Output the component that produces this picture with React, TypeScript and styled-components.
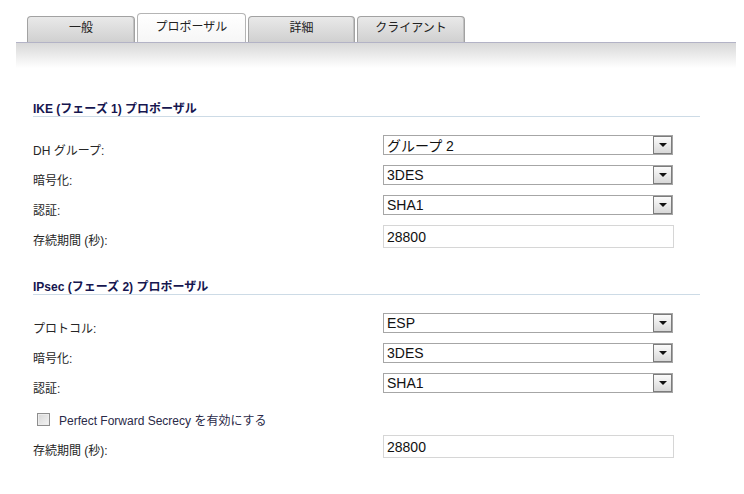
import styled, { createGlobalStyle } from "styled-components";

const GlobalStyle = createGlobalStyle`
  body {
    margin: 0;
    background: #ffffff;
    font-family: "Liberation Sans", "Noto Sans CJK JP", sans-serif;
    color: #222222;
  }
`;

const Page = styled.div`
  width: 720px;
  margin-left: 16px;
`;

const TabBar = styled.nav`
  display: flex;
  align-items: flex-end;
  gap: 2px;
  height: 29px;
  padding: 13px 0 0 11px;
  border-bottom: 1px solid #b3b3c6;
`;

const Tab = styled.button<{ $active?: boolean; $width: number }>`
  width: ${(p) => p.$width}px;
  height: ${(p) => (p.$active ? 29 : 26)}px;
  padding: 0;
  border: 1px solid ${(p) => (p.$active ? "#b4b4b4" : "#a2a2a2")};
  border-bottom: none;
  border-radius: 4px 4px 0 0;
  background: ${(p) =>
    p.$active
      ? "linear-gradient(#ffffff, #f6f6f6)"
      : "linear-gradient(#e9e9e9, #d0d0d0)"};
  box-shadow: ${(p) => (p.$active ? "none" : "inset -1px 0 0 #c0c0c0")};
  font-family: "Liberation Sans", "Noto Sans CJK JP", sans-serif;
  font-size: 12px;
  color: #222222;
  line-height: ${(p) => (p.$active ? 26 : 22)}px;
  padding-bottom: ${(p) => (p.$active ? 3 : 4)}px;
  cursor: pointer;
`;

const Band = styled.div`
  height: 25px;
  background: linear-gradient(#d8d8d8, #ffffff);
`;

const Content = styled.main`
  padding: 34px 36px 0 17px;
`;

const Section = styled.section<{ $gap?: number }>`
  margin-top: ${(p) => p.$gap ?? 0}px;
`;

const SectionTitle = styled.h3`
  margin: 0 0 18px;
  font-size: 12px;
  line-height: 14px;
  font-weight: bold;
  color: #16164f;
  border-bottom: 1px solid #cddbe6;
`;

const Row = styled.div<{ $height?: number }>`
  display: flex;
  align-items: flex-start;
  height: ${(p) => p.$height ?? 30}px;
`;

const Label = styled.label`
  width: 350px;
  padding-top: 6px;
  font-size: 12px;
  line-height: 20px;
  color: #262626;
`;

const SelectBox = styled.div`
  box-sizing: border-box;
  width: 290px;
  height: 20px;
  display: flex;
  align-items: center;
  justify-content: space-between;
  padding: 0 0 0 3px;
  border: 1px solid #a6a6a6;
  background: #ffffff;
  font-family: "Liberation Sans", "Noto Sans CJK JP", sans-serif;
  font-size: 14px;
  color: #111111;
`;

const ArrowButton = styled.span`
  box-sizing: border-box;
  width: 19px;
  height: 18px;
  display: flex;
  align-items: center;
  justify-content: center;
  border: 1px solid #7c7c7c;
  background: linear-gradient(#fbfbfb, #d8d8d8);

  &::after {
    content: "";
    border-left: 4px solid transparent;
    border-right: 4px solid transparent;
    border-top: 4px solid #111111;
  }
`;

const TextInput = styled.input`
  box-sizing: border-box;
  width: 291px;
  height: 23px;
  padding: 0 3px;
  border: 1px solid #d6d6d6;
  font-family: "Liberation Sans", sans-serif;
  font-size: 14px;
  color: #111111;
  outline: none;
`;

const CheckRow = styled.label`
  display: flex;
  align-items: center;
  gap: 9px;
  height: 32px;
  padding-left: 4px;
  font-size: 12px;
  color: #2a2a48;
`;

const CheckBox = styled.span`
  box-sizing: border-box;
  width: 13px;
  height: 13px;
  border: 1px solid #8e8e8e;
  background: linear-gradient(135deg, #d6d6d6, #f4f4f4);
  box-shadow: inset 0 0 0 1px #ececec;
`;

const Select = ({ value }: { value: string }) => (
  <SelectBox>
    <span>{value}</span>
    <ArrowButton />
  </SelectBox>
);

const tabs = [
  { label: "一般", width: 108 },
  { label: "プロポーザル", width: 109, active: true },
  { label: "詳細", width: 107 },
  { label: "クライアント", width: 108 },
];

const App = () => {
  return (
    <>
      <GlobalStyle />
      <Page>
        <TabBar>
          {tabs.map((t) => (
            <Tab key={t.label} $active={t.active} $width={t.width}>
              {t.label}
            </Tab>
          ))}
        </TabBar>
        <Band />
        <Content>
          <Section>
            <SectionTitle>IKE (フェーズ 1) プロポーザル</SectionTitle>
            <Row>
              <Label>DH グループ:</Label>
              <Select value="グループ 2" />
            </Row>
            <Row>
              <Label>暗号化:</Label>
              <Select value="3DES" />
            </Row>
            <Row>
              <Label>認証:</Label>
              <Select value="SHA1" />
            </Row>
            <Row>
              <Label>存続期間 (秒):</Label>
              <TextInput defaultValue="28800" />
            </Row>
          </Section>
          <Section $gap={25}>
            <SectionTitle>IPsec (フェーズ 2) プロポーザル</SectionTitle>
            <Row>
              <Label>プロトコル:</Label>
              <Select value="ESP" />
            </Row>
            <Row>
              <Label>暗号化:</Label>
              <Select value="3DES" />
            </Row>
            <Row>
              <Label>認証:</Label>
              <Select value="SHA1" />
            </Row>
            <CheckRow>
              <CheckBox />
              Perfect Forward Secrecy を有効にする
            </CheckRow>
            <Row>
              <Label>存続期間 (秒):</Label>
              <TextInput defaultValue="28800" />
            </Row>
          </Section>
        </Content>
      </Page>
    </>
  );
};

export default App;
